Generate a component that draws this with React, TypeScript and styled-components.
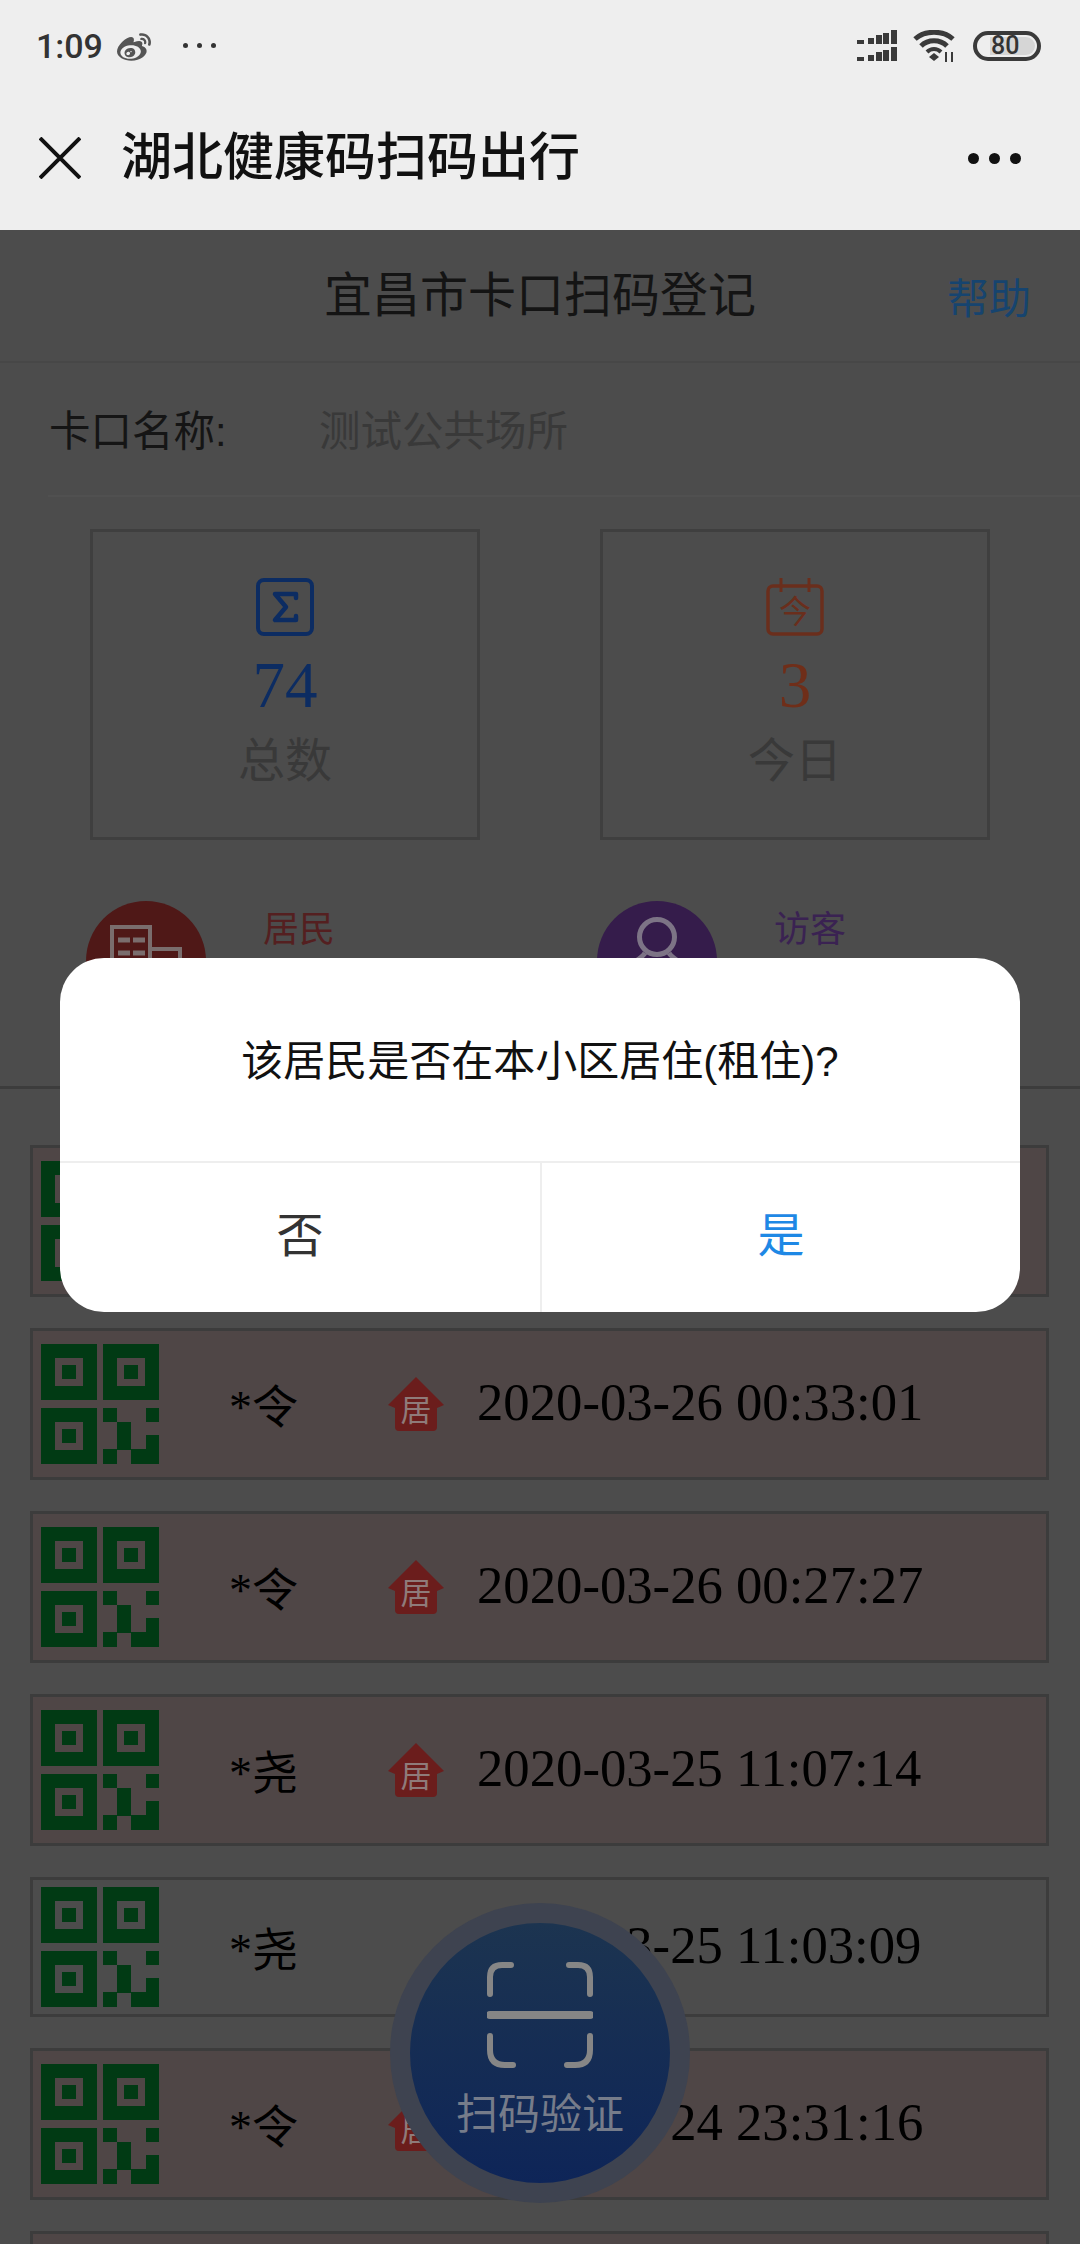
import React from "react";
import styled, { createGlobalStyle } from "styled-components";
import { FaWeibo } from "react-icons/fa";

const SANS = `"Liberation Sans", "Noto Sans CJK SC", sans-serif`;
const SERIF = `"Liberation Serif", "Noto Sans CJK SC", serif`;

const GlobalStyle = createGlobalStyle`
  html, body {
    margin: 0;
    padding: 0;
    background: #4c4c4c;
  }
`;

const Screen = styled.div`
  position: relative;
  width: 1080px;
  height: 2244px;
  overflow: hidden;
  background: #4c4c4c;
  font-family: ${SANS};
`;

const TopChrome = styled.div`
  height: 230px;
  background: #eeeeee;
`;

const StatusBar = styled.div`
  height: 90px;
  padding: 31px 39px 0 36px;
  box-sizing: border-box;
  display: flex;
  align-items: flex-start;
  color: #333;
`;

const Time = styled.span`
  font-family: Roboto, sans-serif;
  font-size: 34px;
  font-weight: 500;
  line-height: 30px;
  width: 81px;
`;

const SmallDots = styled.div`
  display: flex;
  gap: 9px;
  margin: 12px 0 0 32px;

  i {
    width: 5px;
    height: 5px;
    border-radius: 50%;
    background: #333;
  }
`;

const StatusRight = styled.div`
  margin-left: auto;
  margin-top: -1px;
  display: flex;
  align-items: center;
  gap: 16px;
`;

const Battery = styled.div`
  width: 68px;
  height: 30px;
  box-sizing: border-box;
  border: 4px solid #3a3a3a;
  border-radius: 15px;
  padding: 2px 2px 2px 13px;
  display: flex;
`;

const BatteryFill = styled.div`
  flex: 1;
  background: #d6d6d6;
  border-radius: 0 9px 9px 0;
  font-family: Roboto, sans-serif;
  font-size: 25px;
  font-weight: 500;
  line-height: 18px;
  color: #333;
  padding-left: 1px;
`;

const NavBar = styled.div`
  height: 140px;
  display: flex;
  align-items: center;
  padding: 0 59px 4px 39px;
  box-sizing: border-box;
`;

const NavTitle = styled.div`
  margin-left: 40px;
  font-size: 51px;
  line-height: 60px;
  font-weight: 500;
  color: #111;
`;

const NavDots = styled.div`
  margin-left: auto;
  display: flex;
  gap: 10px;

  i {
    width: 11px;
    height: 11px;
    border-radius: 50%;
    background: #111;
  }
`;

const PageHeader = styled.div`
  height: 133px;
  display: grid;
  grid-template-columns: 1fr auto 1fr;
  align-items: center;
  padding: 0 49px;
  box-sizing: border-box;
  border-bottom: 2px solid #474747;
`;

const PageTitle = styled.div`
  grid-column: 2;
  font-size: 48px;
  color: #141414;
  line-height: 60px;
`;

const HelpLink = styled.div`
  justify-self: end;
  font-size: 42px;
  color: #16446f;
`;

const NameRow = styled.div`
  height: 134px;
  margin-left: 48px;
  padding-bottom: 2px;
  box-sizing: border-box;
  border-bottom: 2px solid #505050;
  display: flex;
  align-items: center;
  font-size: 41.5px;
`;

const NameLabel = styled.div`
  width: 270px;
  margin-left: 1px;
  color: #151515;
`;

const NameValue = styled.div`
  color: #393939;
`;

const StatGrid = styled.div`
  display: grid;
  grid-template-columns: 390px 390px;
  column-gap: 120px;
  padding: 32px 0 0 90px;
`;

const StatCard = styled.div`
  height: 311px;
  box-sizing: border-box;
  border: 3px solid #3f3f3f;
  display: flex;
  flex-direction: column;
  align-items: center;
  padding-top: 46px;
`;

const StatValue = styled.div<{ $color: string }>`
  margin-top: 13px;
  font-family: ${SERIF};
  font-size: 65px;
  line-height: 72px;
  color: ${(p) => p.$color};
`;

const StatLabel = styled.div`
  margin-top: 10px;
  font-size: 47px;
  line-height: 60px;
  color: #393939;
`;

const KindGrid = styled.div`
  height: 249px;
  box-sizing: border-box;
  display: grid;
  grid-template-columns: 511px 1fr;
  padding: 61px 0 0 86px;
  border-bottom: 3px solid #3c3c3c;
`;

const Kind = styled.div`
  display: flex;
  gap: 57px;
`;

const KindCircle = styled.div<{ $color: string; $top: number }>`
  width: 120px;
  height: 120px;
  border-radius: 50%;
  background: ${(p) => p.$color};
  display: flex;
  justify-content: center;
  padding-top: ${(p) => p.$top}px;
  box-sizing: border-box;
`;

const KindLabel = styled.div<{ $color: string }>`
  font-size: 36px;
  line-height: 58px;
  color: ${(p) => p.$color};
`;

const List = styled.div`
  padding: 56px 31px 0 30px;
  display: flex;
  flex-direction: column;
  gap: 31px;
`;

const Row = styled.div<{ $plain?: boolean }>`
  height: ${(p) => (p.$plain ? 140 : 152)}px;
  flex: none;
  box-sizing: border-box;
  border: 3px solid #3c3c3c;
  background: ${(p) => (p.$plain ? "#4c4c4c" : "#4f4646")};
  display: flex;
  align-items: center;
  padding-left: 8px;
`;

const Name = styled.div`
  width: 159px;
  margin: 7px 0 0 70px;
  font-family: ${SERIF};
  font-size: 46px;
  line-height: 56px;
  color: #000;
`;

const HouseBadge = styled.div`
  position: relative;
  width: 56px;
  height: 54px;
  flex: none;
  display: flex;
  align-items: flex-end;
  justify-content: center;

  svg {
    position: absolute;
    inset: 0;
  }
`;

const HouseText = styled.span`
  position: relative;
  font-size: 31px;
  line-height: 40px;
  color: #8f7b7a;
`;

const DateText = styled.div<{ $indent: number }>`
  margin: 0 0 4px ${(p) => p.$indent}px;
  font-family: ${SERIF};
  font-size: 52.700px;
  line-height: 60px;
  white-space: nowrap;
  color: #000;
`;

const ScanButton = styled.div`
  position: absolute;
  left: 390px;
  top: 1903px;
  width: 300px;
  height: 300px;
  border-radius: 50%;
  background: #3e4350;
  display: flex;
  align-items: center;
  justify-content: center;
`;

const ScanInner = styled.div`
  width: 260px;
  height: 260px;
  border-radius: 50%;
  background: linear-gradient(#1c3450, #0e2558);
  display: flex;
  flex-direction: column;
  align-items: center;
  padding-top: 39px;
  box-sizing: border-box;
`;

const ScanText = styled.div`
  margin-top: 18px;
  font-size: 42px;
  line-height: 58px;
  color: #767c8a;
`;

const Dialog = styled.div`
  position: absolute;
  left: 60px;
  top: 958px;
  width: 960px;
  height: 354px;
  border-radius: 44px;
  background: #fff;
  display: flex;
  flex-direction: column;
  overflow: hidden;
`;

const DialogText = styled.div`
  height: 205px;
  padding-bottom: 4px;
  box-sizing: border-box;
  display: flex;
  align-items: center;
  justify-content: center;
  font-size: 42px;
  color: #111;
  border-bottom: 2px solid #eeeeee;
`;

const DialogActions = styled.div`
  flex: 1;
  display: grid;
  grid-template-columns: 480px 1fr;
`;

const DialogAction = styled.div<{ $primary?: boolean }>`
  display: flex;
  align-items: center;
  justify-content: center;
  padding-bottom: 12px;
  font-size: 47px;
  color: ${(p) => (p.$primary ? "#1e88e5" : "#333")};
  border-left: ${(p) => (p.$primary ? "2px solid #eeeeee" : "none")};
`;

const SignalIcon = () => {
  const xs = [0, 11, 19, 26, 34];
  const hs = [4, 6, 9, 11, 14];
  const ws = [7, 6, 6, 6, 6];
  return (
    <svg width="40" height="32" viewBox="0 0 40 32" fill="#3a3a3a">
      {xs.map((x, i) => (
        <React.Fragment key={x}>
          <rect x={x} y={14 - hs[i]} width={ws[i]} height={hs[i]} />
          <rect x={x} y={31 - hs[i]} width={ws[i]} height={hs[i]} />
        </React.Fragment>
      ))}
    </svg>
  );
};

const WifiIcon = () => (
  <svg width="44" height="32" viewBox="0 0 44 32" fill="none" stroke="#3a3a3a" strokeWidth="5">
    <path d="M2 9C12 0 30 0 40 9" />
    <path d="M8 16C15 9 27 9 34 16" />
    <path d="M14 22C18 18 24 18 28 22" strokeWidth="4" />
    <path d="M21 23l5 4-5 4-5-4z" fill="#3a3a3a" stroke="none" />
    <path d="M33 22v10M39 22v10" strokeWidth="2" />
  </svg>
);

const CloseIcon = () => (
  <svg width="42" height="42" viewBox="0 0 42 42" stroke="#111" strokeWidth="4" fill="none">
    <path d="M1 1L41 41M41 1L1 41" />
  </svg>
);

const SigmaIcon = () => (
  <svg width="58" height="58" viewBox="0 0 58 58" fill="none" stroke="#0c2c62" strokeLinejoin="round">
    <rect x="2" y="2" width="54" height="54" rx="6" strokeWidth="4" />
    <path d="M40 20V16H19L30 29L19 42H40V38" strokeWidth="4.500" strokeLinecap="round" />
  </svg>
);

const CalendarIcon = () => (
  <svg width="58" height="58" viewBox="0 0 58 58" fill="none" stroke="#6a2e1c">
    <rect x="2" y="8" width="54" height="48" rx="5" strokeWidth="3.500" />
    <path d="M15 0v14M43 0v14" strokeWidth="3" />
    <text x="29" y="45" textAnchor="middle" fontSize="32" fill="#6a2e1c" stroke="none" fontFamily="Noto Sans CJK SC">
      今
    </text>
  </svg>
);

const BuildingIcon = () => (
  <svg width="72" height="72" viewBox="0 0 72 72" fill="none" stroke="#7a6d6d" strokeWidth="4">
    <path d="M2 72V2H40V72" />
    <path d="M8 15H20M23 15H35M8 28H20M23 28H35M8 41H20M23 41H35" strokeWidth="5" />
    <path d="M40 24H70V72" />
  </svg>
);

const PersonIcon = () => (
  <svg width="88" height="90" viewBox="0 0 88 90" fill="none" stroke="#7d7486" strokeWidth="5">
    <circle cx="44" cy="20" r="17.500" />
    <path d="M32 36C26 46 6 48 4 70M56 36C62 46 82 48 84 70" />
  </svg>
);

const QrIcon = () => {
  const finder = (x: number, y: number) => (
    <path
      key={`${x}-${y}`}
      fillRule="evenodd"
      d={`M${x} ${y}h56v56h-56zM${x + 14} ${y + 14}v28h28v-28zM${x + 21} ${y + 21}h14v14h-14z`}
    />
  );
  return (
    <svg width="118" height="120" viewBox="0 0 118 120" fill="#013a14" style={{ flex: "none" }}>
      {finder(0, 0)}
      {finder(62, 0)}
      {finder(0, 64)}
      <rect x="62" y="64" width="14" height="14" />
      <rect x="105" y="64" width="13" height="14" />
      <rect x="76" y="78" width="14" height="28" />
      <rect x="105" y="91" width="13" height="15" />
      <rect x="90" y="105" width="28" height="15" />
      <rect x="62" y="105" width="14" height="15" />
    </svg>
  );
};

const ScanIcon = () => (
  <svg width="106" height="106" viewBox="0 0 106 106" fill="none" stroke="#868686" strokeLinecap="round">
    <path d="M3 32V15Q3 3 15 3H24M82 3H91Q103 3 103 15V32" strokeWidth="6" />
    <path d="M3 53H103" strokeWidth="8" />
    <path d="M3 74V88Q3 103 18 103H26M80 103H88Q103 103 103 88V74" strokeWidth="6" />
  </svg>
);

const HouseShape = () => (
  <svg width="56" height="54" viewBox="0 0 56 54" fill="#6b1d1c">
    <path d="M28 0L56 28L49 31V50Q49 54 45 54H11Q7 54 7 50V31L0 28Z" />
  </svg>
);

const records = [
  { name: "*令", date: "2020-03-26 00:33:01", house: true },
  { name: "*令", date: "2020-03-26 00:27:27", house: true },
  { name: "*尧", date: "2020-03-25 11:07:14", house: true },
  { name: "*尧", date: "2020-03-25 11:03:09", house: false },
  { name: "*令", date: "2020-03-24 23:31:16", house: true },
];

export default function App() {
  return (
    <Screen>
      <GlobalStyle />
      <TopChrome>
        <StatusBar>
          <Time>1:09</Time>
          <FaWeibo size={34} color="#555" />
          <SmallDots>
            <i />
            <i />
            <i />
          </SmallDots>
          <StatusRight>
            <SignalIcon />
            <WifiIcon />
            <Battery>
              <BatteryFill>80</BatteryFill>
            </Battery>
          </StatusRight>
        </StatusBar>
        <NavBar>
          <CloseIcon />
          <NavTitle>湖北健康码扫码出行</NavTitle>
          <NavDots>
            <i />
            <i />
            <i />
          </NavDots>
        </NavBar>
      </TopChrome>

      <PageHeader>
        <PageTitle>宜昌市卡口扫码登记</PageTitle>
        <HelpLink>帮助</HelpLink>
      </PageHeader>

      <NameRow>
        <NameLabel>卡口名称:</NameLabel>
        <NameValue>测试公共场所</NameValue>
      </NameRow>

      <StatGrid>
        <StatCard>
          <SigmaIcon />
          <StatValue $color="#0c2c62">74</StatValue>
          <StatLabel>总数</StatLabel>
        </StatCard>
        <StatCard>
          <CalendarIcon />
          <StatValue $color="#6f2e19">3</StatValue>
          <StatLabel>今日</StatLabel>
        </StatCard>
      </StatGrid>

      <KindGrid>
        <Kind>
          <KindCircle $color="#4f1817" $top={24}>
            <BuildingIcon />
          </KindCircle>
          <KindLabel $color="#541f20">居民</KindLabel>
        </Kind>
        <Kind>
          <KindCircle $color="#351c4b" $top={16}>
            <PersonIcon />
          </KindCircle>
          <KindLabel $color="#3a2252">访客</KindLabel>
        </Kind>
      </KindGrid>

      <List>
        {/* this row sits behind the dialog, only its code shows */}
        <Row>
          <QrIcon />
        </Row>
        {records.map((r) => (
          <Row key={r.date} $plain={!r.house}>
            <QrIcon />
            <Name>{r.name}</Name>
            {r.house && (
              <HouseBadge>
                <HouseShape />
                <HouseText>居</HouseText>
              </HouseBadge>
            )}
            <DateText $indent={r.house ? 33 : 89}>{r.date}</DateText>
          </Row>
        ))}
        <Row />
      </List>

      <ScanButton>
        <ScanInner>
          <ScanIcon />
          <ScanText>扫码验证</ScanText>
        </ScanInner>
      </ScanButton>

      <Dialog>
        <DialogText>该居民是否在本小区居住(租住)?</DialogText>
        <DialogActions>
          <DialogAction>否</DialogAction>
          <DialogAction $primary>是</DialogAction>
        </DialogActions>
      </Dialog>
    </Screen>
  );
}
